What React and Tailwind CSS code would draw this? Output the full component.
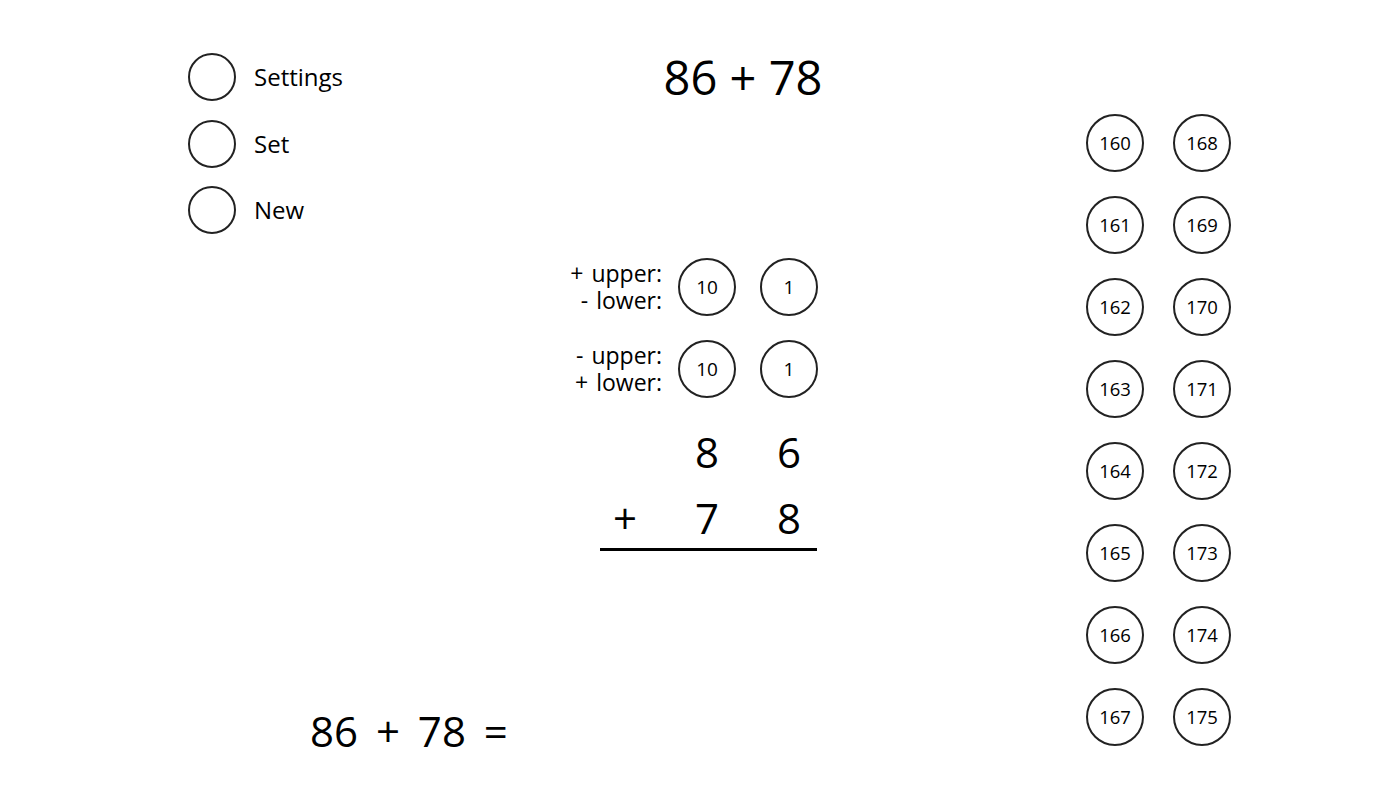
import React from "react";

const font = { fontFamily: '"Segoe UI", "Open Sans", "Noto Sans", sans-serif' };

function Circle({ children, text = "text-[18.5px]" }) {
  return (
    <div
      className={`w-[58px] h-[58px] rounded-full border-2 border-[#222] flex items-center justify-center ${text} text-black leading-none shrink-0`}
    >
      {children}
    </div>
  );
}

export default function App() {
  const left = [160, 161, 162, 163, 164, 165, 166, 167];
  const right = [168, 169, 170, 171, 172, 173, 174, 175];
  return (
    <div className="w-[1399px] h-[787px] bg-white text-black flex overflow-hidden" style={font}>
      {/* Left column */}
      <div className="ml-[188px] w-[370px] flex flex-col justify-between pt-[53px] pb-[35px]">
        <div className="flex flex-col gap-[18.5px]">
          {["Settings", "Set", "New"].map((t) => (
            <div key={t} className="flex items-center gap-[18px]">
              <div className="w-[48px] h-[48px] rounded-full border-2 border-[#222] shrink-0" />
              <span className="text-[24px] leading-none">{t}</span>
            </div>
          ))}
        </div>
        <div className="ml-[122px] text-[42px] leading-none [word-spacing:7px]">86 + 78 =</div>
      </div>

      {/* Center column */}
      <div className="w-[370px] flex flex-col items-center">
        <div className="mt-[54px] text-[47px] leading-none">86 + 78</div>
        <div className="mt-[157px] flex flex-col gap-[24px] w-full">
          {[
            ["+ upper:", "- lower:"],
            ["- upper:", "+ lower:"],
          ].map((lab, i) => (
            <div key={i} className="flex items-center">
              <p className="w-[104px] text-right text-[23px] leading-[27px] [word-spacing:2px]">
                {lab[0]}
                <br />
                {lab[1]}
              </p>
              <div className="ml-[16px] flex gap-[24px]">
                <Circle text="text-[19px]">10</Circle>
                <Circle text="text-[19px]">1</Circle>
              </div>
            </div>
          ))}
        </div>
        <div className="mt-[19px] self-start ml-[38px] w-[222px]">
          <div className="grid grid-cols-[58px_58px_58px] gap-x-[24px] text-[42px] leading-[66px] text-center pt-[2px]">
            <div></div>
            <div>8</div>
            <div>6</div>
            <div>+</div>
            <div>7</div>
            <div>8</div>
          </div>
          <div className="h-[3px] bg-black ml-[4px] mr-[1px] -mt-[3px]" />
        </div>
      </div>

      {/* Right column */}
      <div className="pl-[158px] pt-[114px] flex gap-[29px]">
        {[left, right].map((col, ci) => (
          <div key={ci} className="flex flex-col gap-[24px]">
            {col.map((n) => (
              <Circle key={n}>{n}</Circle>
            ))}
          </div>
        ))}
      </div>
    </div>
  );
}
